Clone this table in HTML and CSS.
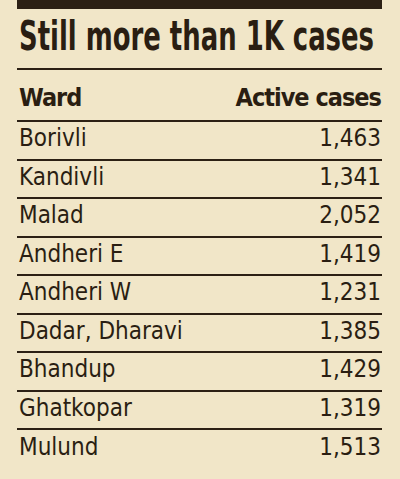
FILE: index.html
```html
<!DOCTYPE html>
<html lang="en">
<head>
    <meta charset="UTF-8">
    <meta name="viewport" content="width=device-width, initial-scale=1.0">
    <title>Still more than 1K cases</title>
    <link rel="stylesheet" href="styles.css">
</head>
<body>
    <div class="panel">
        <div class="top-bar"></div>
        <h1><span class="title-text">Still more than 1K cases</span></h1>

        <table class="cases">
            <thead>
                <tr>
                    <th>Ward</th>
                    <th class="num">Active cases</th>
                </tr>
            </thead>
            <tbody>
                <tr><td>Borivli</td><td class="num">1,463</td></tr>
                <tr><td>Kandivli</td><td class="num">1,341</td></tr>
                <tr><td>Malad</td><td class="num">2,052</td></tr>
                <tr><td>Andheri E</td><td class="num">1,419</td></tr>
                <tr><td>Andheri W</td><td class="num">1,231</td></tr>
                <tr><td>Dadar, Dharavi</td><td class="num">1,385</td></tr>
                <tr><td>Bhandup</td><td class="num">1,429</td></tr>
                <tr><td>Ghatkopar</td><td class="num">1,319</td></tr>
                <tr><td>Mulund</td><td class="num">1,513</td></tr>
            </tbody>
        </table>
    </div>
</body>
</html>
```

FILE: styles.css
```css
body {
    margin: 0;
    background-color: #f1e6c8;
    color: #2a1e12;
    font-family: 'DejaVu Sans Condensed', 'DejaVu Sans', sans-serif;
    font-stretch: condensed;
}

.panel {
    padding: 0 18px 0 17px;
}

.top-bar {
    height: 9px;
    background-color: #2c2014;
}

h1 {
    margin: 0;
    height: 61px;
    line-height: 54px;
    font-size: 40px;
    font-weight: 700;
    padding-left: 2px;
    white-space: nowrap;
    overflow: hidden;
    border-bottom: 2px solid #2c2014;
    box-sizing: border-box;
}

/* the headline face is much narrower than any installed font */
.title-text {
    display: inline-block;
    transform: scaleX(0.72);
    transform-origin: left center;
}

.cases {
    width: 100%;
    border-collapse: collapse;
}

.cases th,
.cases td {
    padding: 0 1px 0 2px;
    text-align: left;
    border-bottom: 2px solid #2c2014;
}

.cases th {
    height: 51px;
    padding-top: 4px;
    font-size: 25px;
    font-weight: 700;
    letter-spacing: -1px;
    box-sizing: border-box;
}

.cases td {
    height: 38.5px;
    padding-bottom: 4px;
    font-size: 24px;
    box-sizing: border-box;
}

.cases tbody tr:last-child td {
    border-bottom: none;
}

.cases .num {
    text-align: right;
}
```
